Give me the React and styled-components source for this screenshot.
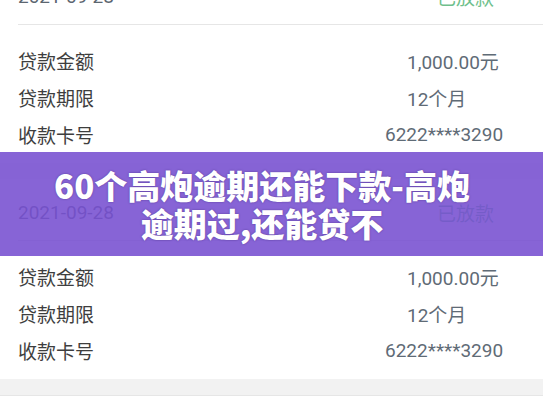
import React from "react";
import styled, { createGlobalStyle } from "styled-components";

const Global = createGlobalStyle`
  html, body {
    margin: 0;
    padding: 0;
    background: #ffffff;
    overflow: hidden;
  }
  body {
    font-family: Roboto, "Noto Sans CJK SC", sans-serif;
  }
`;

const Page = styled.div`
  position: relative;
  width: 543px;
  height: 408px;
  overflow: hidden;
  background: #ffffff;
`;

const List = styled.div`
  margin-top: -37px;
  display: flex;
  flex-direction: column;
`;

const Card = styled.div`
  background: #ffffff;
  border-bottom: 16px solid #f2f2f2;
  box-shadow: 0 1px 0 #e6e6e6;
  padding-bottom: 10px;
`;

const Header = styled.div`
  height: 61px;
  box-sizing: border-box;
  padding: 5px 49px 0 18px;
  display: flex;
  align-items: center;
  justify-content: space-between;
  font-size: 19px;
`;

const Date = styled.span`
  color: #5c6670;
`;

const Status = styled.span`
  color: #6fbf8c;
  font-family: "Noto Sans CJK SC", sans-serif;
`;

const Divider = styled.div`
  height: 1px;
  margin-left: 18px;
  background: #e6e6e6;
`;

const Rows = styled.div`
  padding-top: 17px;
  display: flex;
  flex-direction: column;
`;

const Row = styled.div`
  height: 37px;
  display: flex;
  align-items: center;
  padding-left: 18px;
`;

const Label = styled.span`
  width: ${props => 389 + (props.$shift || 0)}px;
  font-family: "Noto Sans CJK SC", sans-serif;
  font-size: 19px;
  color: #3e3e3e;
`;

const Value = styled.span`
  font-family: Roboto, "Noto Sans CJK SC", sans-serif;
  font-size: 19px;
  color: #5f6b76;
`;

const Banner = styled.div`
  position: absolute;
  top: 152px;
  left: 0;
  right: 0;
  height: 104px;
  padding-right: 19px;
  background: rgba(118, 78, 208, 0.88);
  display: flex;
  align-items: center;
  justify-content: center;
`;

const Title = styled.h1`
  margin: 0;
  width: 450px;
  text-align: center;
  font-family: "Noto Sans CJK SC", sans-serif;
  font-weight: 900;
  font-size: 33px;
  line-height: 38px;
  color: #ffffff;
  text-shadow: 0 0 2px rgba(40, 20, 90, 0.5);
`;

const rows = [
  { label: "贷款金额", value: "1,000.00元" },
  { label: "贷款期限", value: "12个月" },
  { label: "收款卡号", value: "6222****3290", shift: -22 },
];

function LoanCard() {
  return (
    <Card>
      <Header>
        <Date>2021-09-28</Date>
        <Status>已放款</Status>
      </Header>
      <Divider />
      <Rows>
        {rows.map(r => (
          <Row key={r.label}>
            <Label $shift={r.shift}>{r.label}</Label>
            <Value>{r.value}</Value>
          </Row>
        ))}
      </Rows>
    </Card>
  );
}

export default function App() {
  return (
    <Page>
      <Global />
      <List>
        <LoanCard />
        <LoanCard />
      </List>
      <Banner>
        <Title>
          60个高炮逾期还能下款-高炮
          <br />
          逾期过,还能贷不
        </Title>
      </Banner>
    </Page>
  );
}
